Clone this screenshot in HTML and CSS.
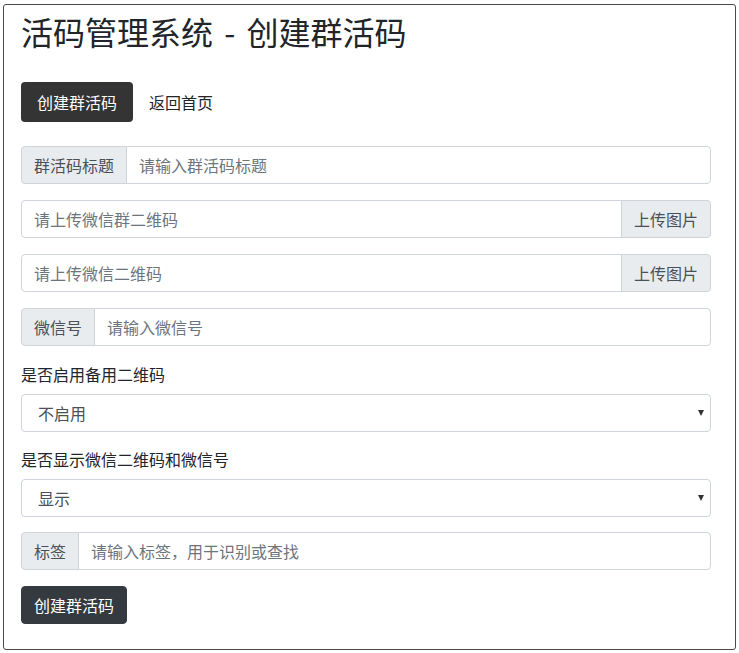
FILE: index.html
```html
<!DOCTYPE html>
<html lang="zh-CN">
<head>
<meta charset="utf-8">
<title>活码管理系统 - 创建群活码</title>
<link rel="stylesheet" href="styles.css">
</head>
<body>
<div class="page">
  <h1 class="title">活码管理系统<span class="dash"> - </span>创建群活码</h1>
  <nav class="pills">
    <a class="pill active">创建群活码</a>
    <a class="pill">返回首页</a>
  </nav>
  <form class="form">
    <div class="group">
      <span class="addon addon-left">群活码标题</span>
      <input class="control" type="text" placeholder="请输入群活码标题">
    </div>
    <div class="group">
      <input class="control control-left" type="text" placeholder="请上传微信群二维码">
      <span class="addon addon-right">上传图片</span>
    </div>
    <div class="group">
      <input class="control control-left" type="text" placeholder="请上传微信二维码">
      <span class="addon addon-right">上传图片</span>
    </div>
    <div class="group">
      <span class="addon addon-left">微信号</span>
      <input class="control" type="text" placeholder="请输入微信号">
    </div>
    <div class="field">
      <label class="label">是否启用备用二维码</label>
      <div class="select-wrap">
        <select class="select">
          <option>不启用</option>
          <option>启用</option>
        </select>
      </div>
    </div>
    <div class="field">
      <label class="label">是否显示微信二维码和微信号</label>
      <div class="select-wrap">
        <select class="select">
          <option>显示</option>
          <option>不显示</option>
        </select>
      </div>
    </div>
    <div class="group">
      <span class="addon addon-left">标签</span>
      <input class="control" type="text" placeholder="请输入标签，用于识别或查找">
    </div>
    <button class="submit" type="button">创建群活码</button>
  </form>
</div>
</body>
</html>
```

FILE: styles.css
```css
* { box-sizing: border-box; }

html, body {
  margin: 0;
  padding: 0;
  background: #fff;
}

body {
  font-family: "Noto Sans CJK SC", "Noto Sans", sans-serif;
  font-size: 16px;
  line-height: 1.5;
  color: #212529;
}

.page {
  margin: 4px 3px 3px 3px;
  border: 1px solid #4a4a4a;
  border-radius: 3px;
  padding: 7px 24px 25px 17px;
}

.title {
  margin: 0 0 32px 0;
  font-size: 32px;
  font-weight: 400;
  line-height: 1.2;
  color: #212529;
}

.dash {
  padding: 0 4px;
}

.pills {
  display: flex;
  margin-bottom: 24px;
}

.pill {
  display: block;
  padding: 8px 16px;
  font-size: 16px;
  line-height: 24px;
  color: #212529;
  border-radius: 4px;
  text-decoration: none;
}

.pill.active {
  background: #343434;
  color: #fff;
}

.form {
  display: flex;
  flex-direction: column;
}

.group {
  display: flex;
  align-items: stretch;
  height: 38px;
  margin-bottom: 16px;
}

.addon {
  display: flex;
  align-items: center;
  padding: 6px 12px;
  font-size: 16px;
  line-height: 24px;
  color: #495057;
  background: #e9ecef;
  border: 1px solid #ced4da;
  white-space: nowrap;
}

.addon-left {
  border-radius: 4px 0 0 4px;
}

.addon-right {
  border-radius: 0 4px 4px 0;
  margin-left: -1px;
}

.control {
  flex: 1;
  min-width: 0;
  height: 38px;
  padding: 6px 12px;
  font-family: inherit;
  font-size: 16px;
  line-height: 24px;
  color: #495057;
  background: #fff;
  border: 1px solid #ced4da;
  border-radius: 0 4px 4px 0;
  margin-left: -1px;
  outline: none;
}

.control-left {
  border-radius: 4px 0 0 4px;
  margin-left: 0;
}

.control::placeholder {
  color: #6c757d;
  opacity: 1;
}

.field {
  margin-bottom: 15px;
}

.label {
  display: block;
  margin-bottom: 8px;
  font-size: 16px;
  line-height: 24px;
  color: #212529;
}

.select-wrap {
  position: relative;
}

.select-wrap::after {
  content: "";
  position: absolute;
  right: 7px;
  top: 16px;
  border-left: 3.5px solid transparent;
  border-right: 3.5px solid transparent;
  border-top: 6px solid #333;
  pointer-events: none;
}

.select {
  display: block;
  width: 100%;
  height: 38px;
  padding: 6px 28px 6px 16px;
  font-family: inherit;
  font-size: 16px;
  line-height: 24px;
  color: #495057;
  background: #fff;
  border: 1px solid #ced4da;
  border-radius: 4px;
  appearance: none;
  -webkit-appearance: none;
  outline: none;
}

.submit {
  align-self: flex-start;
  height: 38px;
  padding: 6px 12px;
  font-family: inherit;
  font-size: 16px;
  line-height: 24px;
  color: #fff;
  background: #343a40;
  border: 1px solid #343a40;
  border-radius: 4px;
  cursor: pointer;
}
```
